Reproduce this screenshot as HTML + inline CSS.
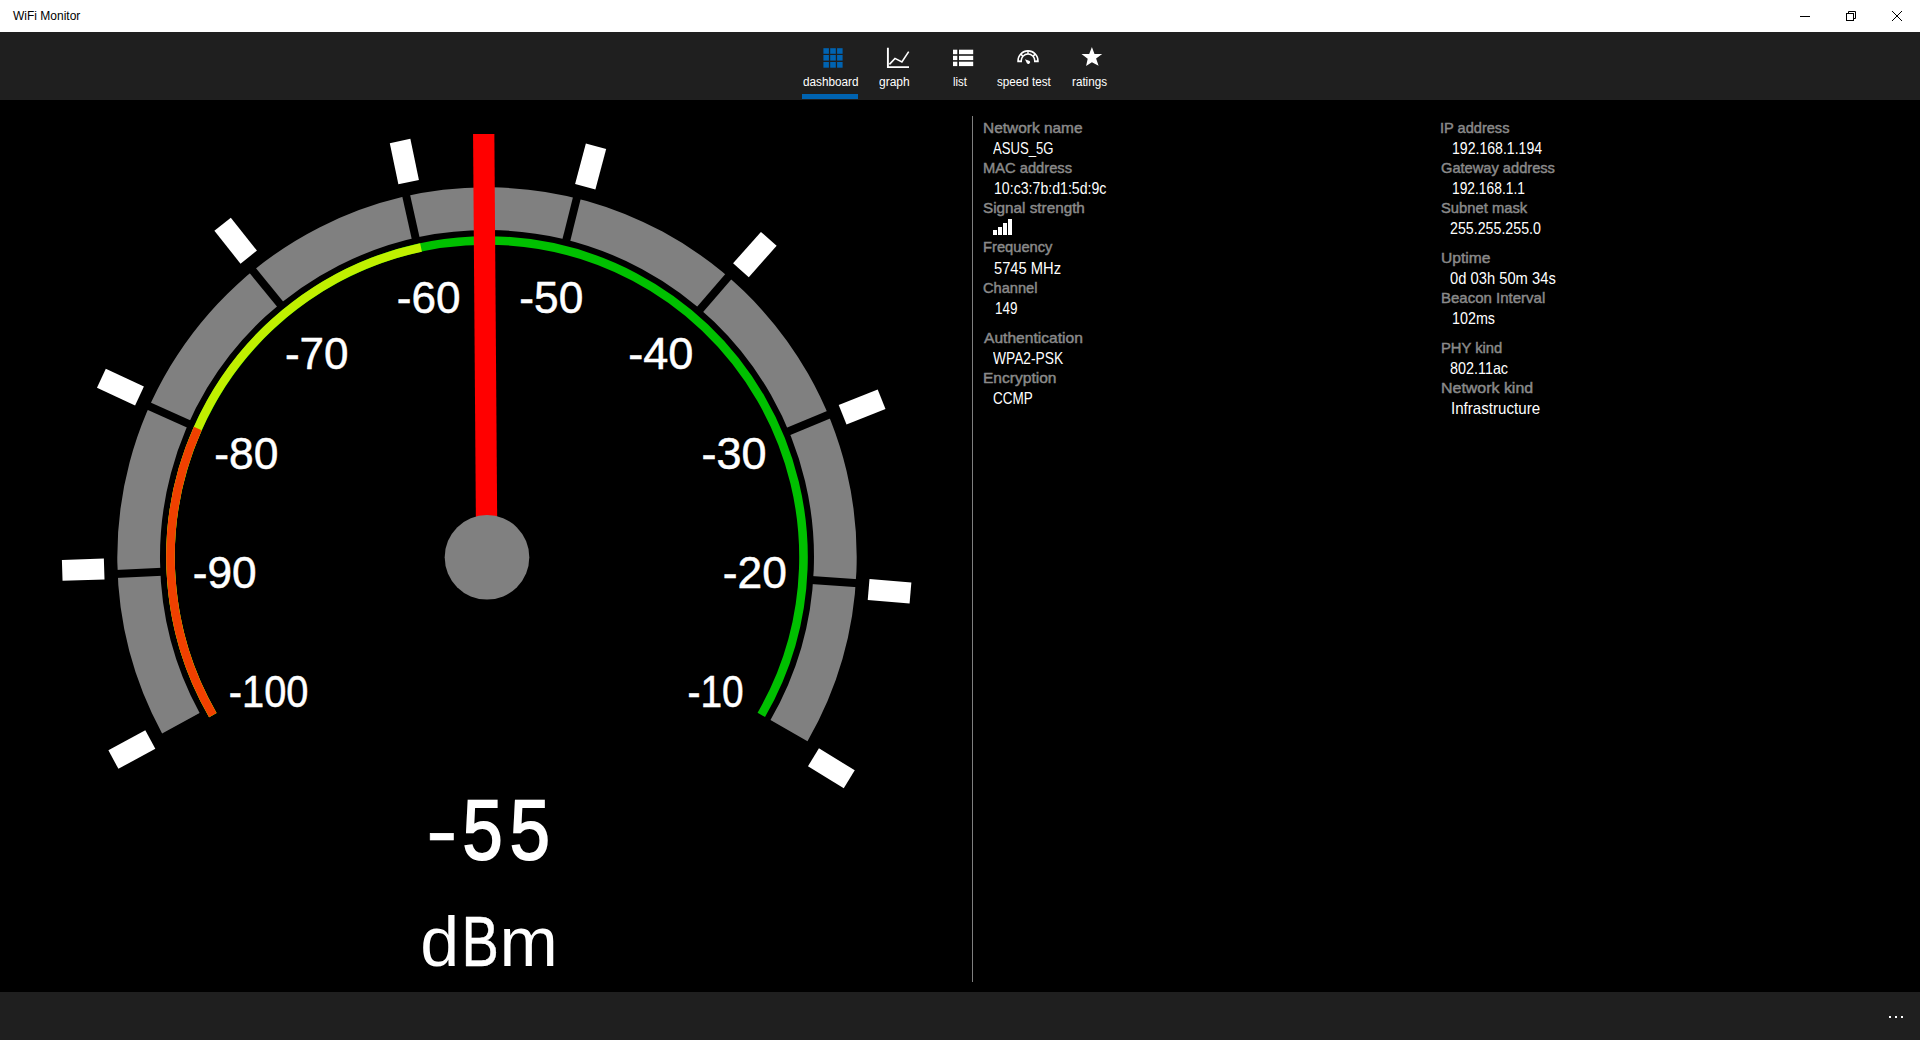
<!DOCTYPE html>
<html><head><meta charset="utf-8"><title>WiFi Monitor</title>
<style>
html,body{margin:0;padding:0;width:1920px;height:1040px;overflow:hidden;background:#000;font-family:"Liberation Sans",sans-serif;}
.abs{position:absolute;}
#title{left:0;top:0;width:1920px;height:32px;background:#fff;}
.ttl{font-size:12px;color:#000;line-height:14px;white-space:nowrap;transform-origin:0 0;}
#nav{left:0;top:32px;width:1920px;height:68px;background:#1f1f1f;}
#bottom{left:0;top:992px;width:1920px;height:48px;background:#1f1f1f;}
.navl{font-size:12px;color:#fff;line-height:14px;white-space:nowrap;transform-origin:0 0;}
#vline{left:972px;top:116px;width:1px;height:866px;background:#7f7f7f;}
.k{font-size:15px;color:#8a8a8a;-webkit-text-stroke:0.45px #8a8a8a;white-space:nowrap;line-height:20px;transform-origin:0 0;}
.v{font-size:15.5px;color:#fff;white-space:nowrap;line-height:20px;transform-origin:0 0;}
svg.gauge{position:absolute;left:0;top:0;}
.lbl{font-family:"Liberation Sans",sans-serif;font-size:44px;fill:#fff;stroke:#fff;stroke-width:0.5px;text-anchor:middle;}
#big{left:287px;top:786px;width:400px;text-align:center;font-size:88px;font-weight:bold;color:#fff;line-height:88px;}
#unit{left:287px;top:902px;width:400px;text-align:center;font-size:70px;color:#fff;line-height:80px;}
</style></head><body>
<div id="title" class="abs">
<svg class="abs" style="left:0;top:0" width="1920" height="32">
<rect x="1800" y="16" width="10" height="1" fill="#000"/>
<rect x="1846.5" y="13.5" width="7" height="7" fill="none" stroke="#000" stroke-width="1"/>
<path d="M1848.5 13.5V11.5H1855.5V18.5H1853.5" fill="none" stroke="#000" stroke-width="1"/>
<path d="M1892 11L1902 21M1902 11L1892 21" stroke="#000" stroke-width="1"/>
</svg>
</div>
<div id="nav" class="abs">
<svg class="abs" style="left:0;top:0" width="1920" height="68">
<g fill="#0063B1">
<rect x="823.4" y="16.2" width="5.5" height="5.6"/><rect x="830.2" y="16.2" width="5.6" height="5.6"/><rect x="837.1" y="16.2" width="5.5" height="5.6"/>
<rect x="823.4" y="23" width="5.5" height="5.6"/><rect x="830.2" y="23" width="5.6" height="5.6"/><rect x="837.1" y="23" width="5.5" height="5.6"/>
<rect x="823.4" y="30" width="5.5" height="5.7"/><rect x="830.2" y="30" width="5.6" height="5.7"/><rect x="837.1" y="30" width="5.5" height="5.7"/>
</g>
<rect x="802" y="62" width="56" height="5" fill="#0063B1"/>
<path d="M887.9 15.8V35.1H909" fill="none" stroke="#fff" stroke-width="1.9"/>
<path d="M889.4 32.4L895 26.4L901.9 29.9L908.7 19.6" fill="none" stroke="#fff" stroke-width="1.6"/>
<g fill="#fff">
<rect x="953" y="17.7" width="4.3" height="4.5"/><rect x="959" y="17.7" width="14.2" height="4.5"/>
<rect x="953" y="23.8" width="4.3" height="4.3"/><rect x="959" y="23.8" width="14.2" height="4.3"/>
<rect x="953" y="29.7" width="4.3" height="4.4"/><rect x="959" y="29.7" width="14.2" height="4.4"/>
</g>
<path d="M1017.25 30.25V28.75A10.75 10.75 0 0 1 1038.75 28.75V30.25H1034V28.75A6 6 0 0 0 1022 28.75V30.25Z" fill="#fff"/>
<g fill="none" stroke="#1f1f1f" stroke-width="1.6">
<path d="M1019.7 28.4A8.3 8.3 0 0 1 1021.3 23.8"/><path d="M1022.5 22.6A8.3 8.3 0 0 1 1027.3 20.5"/><path d="M1028.7 20.5A8.3 8.3 0 0 1 1033.5 22.6"/><path d="M1034.7 23.8A8.3 8.3 0 0 1 1036.3 28.4"/>
</g>
<path d="M1025 27.2L1029.7 28.9A1.8 1.8 0 0 1 1026.9 31.2Z" fill="#fff"/>
<path d="M1091.9 15L1094.5 21.9H1102.2L1096.1 26.6L1098.6 33.8L1091.9 30.3L1086.1 34L1087.7 26.8L1081.5 22.1H1089.2Z" fill="#fff"/>
</svg>
</div>
<div id="bottom" class="abs">
<svg class="abs" style="left:0;top:0" width="1920" height="48">
<rect x="1889" y="24" width="2" height="2" fill="#fff"/><rect x="1895" y="24" width="2" height="2" fill="#fff"/><rect x="1901" y="24" width="2" height="2" fill="#fff"/>
</svg>
</div>
<div id="vline" class="abs"></div>
<div class="k abs" style="left:983.40px;top:118.00px;transform:scaleX(1.0289)">Network name</div>
<div class="v abs" style="left:992.60px;top:138.00px;transform:scale(0.8451,1.05)">ASUS_5G</div>
<div class="k abs" style="left:983.40px;top:158.00px;transform:scaleX(0.9802)">MAC address</div>
<div class="v abs" style="left:993.80px;top:178.00px;transform:scale(0.9122,1.05)">10:c3:7b:d1:5d:9c</div>
<div class="k abs" style="left:983.40px;top:198.00px;transform:scaleX(1.0180)">Signal strength</div>
<svg class="abs" style="left:993px;top:217px" width="24" height="20"><g fill="#fff"><rect x="0" y="13" width="4" height="5"/><rect x="5" y="10" width="4" height="8"/><rect x="10" y="6" width="4" height="12"/><rect x="15" y="2" width="4" height="16"/></g></svg>
<div class="k abs" style="left:983.40px;top:237.00px;transform:scaleX(0.9803)">Frequency</div>
<div class="v abs" style="left:993.80px;top:258.00px;transform:scale(0.9494,1.05)">5745 MHz</div>
<div class="k abs" style="left:983.40px;top:278.00px;transform:scaleX(0.9750)">Channel</div>
<div class="v abs" style="left:994.60px;top:298.00px;transform:scale(0.8694,1.05)">149</div>
<div class="k abs" style="left:984.44px;top:328.00px;transform:scaleX(1.0396)">Authentication</div>
<div class="v abs" style="left:992.60px;top:348.00px;transform:scale(0.8886,1.05)">WPA2-PSK</div>
<div class="k abs" style="left:983.40px;top:368.00px;transform:scaleX(1.0367)">Encryption</div>
<div class="v abs" style="left:992.60px;top:388.00px;transform:scale(0.8712,1.05)">CCMP</div>
<div class="k abs" style="left:1440.02px;top:118.00px;transform:scaleX(0.9719)">IP address</div>
<div class="v abs" style="left:1451.60px;top:138.00px;transform:scale(0.9091,1.05)">192.168.1.194</div>
<div class="k abs" style="left:1441.00px;top:158.00px;transform:scaleX(0.9761)">Gateway address</div>
<div class="v abs" style="left:1451.60px;top:178.00px;transform:scale(0.8902,1.05)">192.168.1.1</div>
<div class="k abs" style="left:1441.00px;top:198.00px;transform:scaleX(0.9842)">Subnet mask</div>
<div class="v abs" style="left:1450.40px;top:218.00px;transform:scale(0.9172,1.05)">255.255.255.0</div>
<div class="k abs" style="left:1441.00px;top:248.00px;transform:scaleX(1.0417)">Uptime</div>
<div class="v abs" style="left:1450.40px;top:268.00px;transform:scale(0.9514,1.05)">0d 03h 50m 34s</div>
<div class="k abs" style="left:1441.00px;top:288.00px;transform:scaleX(1.0000)">Beacon Interval</div>
<div class="v abs" style="left:1451.60px;top:308.00px;transform:scale(0.9234,1.05)">102ms</div>
<div class="k abs" style="left:1441.00px;top:338.00px;transform:scaleX(0.9839)">PHY kind</div>
<div class="v abs" style="left:1450.40px;top:358.00px;transform:scale(0.9270,1.05)">802.11ac</div>
<div class="k abs" style="left:1441.00px;top:378.00px;transform:scaleX(1.0628)">Network kind</div>
<div class="v abs" style="left:1450.62px;top:398.00px;transform:scale(0.9756,1.05)">Infrastructure</div>
<div class="navl abs" style="left:803.10px;top:75.00px;transform:scaleX(0.9787)">dashboard</div>
<div class="navl abs" style="left:879.40px;top:75.00px;transform:scaleX(1.0003)">graph</div>
<div class="navl abs" style="left:952.81px;top:75.00px;transform:scaleX(0.9474)">list</div>
<div class="navl abs" style="left:997.40px;top:75.00px;transform:scaleX(0.9714)">speed test</div>
<div class="navl abs" style="left:1071.80px;top:75.00px;transform:scaleX(0.9724)">ratings</div>
<div class="ttl abs" style="left:13.00px;top:9.00px">WiFi Monitor</div>
<svg class="gauge" width="1920" height="1040" viewBox="0 0 1920 1040">
<path d="M180.86 723.22A348.35 348.35 0 1 1 788.98 730.65" fill="none" stroke="#808080" stroke-width="42.7"/>
<rect x="483.00" y="185.00" width="8" height="47" fill="#000" transform="rotate(-119.280 487.0 557.0)"/>
<rect x="483.00" y="185.00" width="8" height="47" fill="#000" transform="rotate(-92.613 487.0 557.0)"/>
<rect x="483.00" y="185.00" width="8" height="47" fill="#000" transform="rotate(-65.947 487.0 557.0)"/>
<rect x="483.00" y="185.00" width="8" height="47" fill="#000" transform="rotate(-39.280 487.0 557.0)"/>
<rect x="483.00" y="185.00" width="8" height="47" fill="#000" transform="rotate(-12.613 487.0 557.0)"/>
<rect x="483.00" y="185.00" width="8" height="47" fill="#000" transform="rotate(14.053 487.0 557.0)"/>
<rect x="483.00" y="185.00" width="8" height="47" fill="#000" transform="rotate(40.720 487.0 557.0)"/>
<rect x="483.00" y="185.00" width="8" height="47" fill="#000" transform="rotate(67.387 487.0 557.0)"/>
<rect x="483.00" y="185.00" width="8" height="47" fill="#000" transform="rotate(94.053 487.0 557.0)"/>
<rect x="483.00" y="185.00" width="8" height="47" fill="#000" transform="rotate(120.720 487.0 557.0)"/>
<rect x="476.50" y="132.00" width="21" height="42" fill="#fff" transform="rotate(-118.470 487.0 557.0)"/>
<rect x="476.50" y="132.00" width="21" height="42" fill="#fff" transform="rotate(-91.803 487.0 557.0)"/>
<rect x="476.50" y="132.00" width="21" height="42" fill="#fff" transform="rotate(-65.137 487.0 557.0)"/>
<rect x="476.50" y="132.00" width="21" height="42" fill="#fff" transform="rotate(-38.470 487.0 557.0)"/>
<rect x="476.50" y="132.00" width="21" height="42" fill="#fff" transform="rotate(-11.803 487.0 557.0)"/>
<rect x="476.50" y="132.00" width="21" height="42" fill="#fff" transform="rotate(14.863 487.0 557.0)"/>
<rect x="476.50" y="132.00" width="21" height="42" fill="#fff" transform="rotate(41.530 487.0 557.0)"/>
<rect x="476.50" y="132.00" width="21" height="42" fill="#fff" transform="rotate(68.197 487.0 557.0)"/>
<rect x="476.50" y="132.00" width="21" height="42" fill="#fff" transform="rotate(94.863 487.0 557.0)"/>
<rect x="476.50" y="132.00" width="21" height="42" fill="#fff" transform="rotate(121.530 487.0 557.0)"/>
<path d="M212.82 715.11A316.5 316.5 0 1 1 761.29 714.92" fill="none" stroke="#00C000" stroke-width="8.6"/>
<path d="M212.82 715.11A316.5 316.5 0 0 1 421.03 247.45" fill="none" stroke="#C0F000" stroke-width="8.6"/>
<path d="M212.82 715.11A316.5 316.5 0 0 1 197.75 428.52" fill="none" stroke="#F04000" stroke-width="8.6"/>
<rect x="476.15" y="134" width="21.3" height="423" fill="#f00" transform="rotate(-0.42 486.8 557.0)"/>
<circle cx="487" cy="557.3" r="42.3" fill="#808080"/>
<text transform="translate(268.60 707.25) scale(0.9049 1)" x="0" y="0" class="lbl">-100</text>
<text transform="translate(224.75 587.50) scale(1.0052 1)" x="0" y="0" class="lbl">-90</text>
<text transform="translate(246.35 469.25) scale(1.0084 1)" x="0" y="0" class="lbl">-80</text>
<text transform="translate(316.70 368.65) scale(1.0000 1)" x="0" y="0" class="lbl">-70</text>
<text transform="translate(428.65 313.20) scale(1.0017 1)" x="0" y="0" class="lbl">-60</text>
<text transform="translate(551.30 313.20) scale(1.0067 1)" x="0" y="0" class="lbl">-50</text>
<text transform="translate(660.75 368.65) scale(1.0251 1)" x="0" y="0" class="lbl">-40</text>
<text transform="translate(734.10 469.25) scale(1.0235 1)" x="0" y="0" class="lbl">-30</text>
<text transform="translate(754.75 587.50) scale(1.0084 1)" x="0" y="0" class="lbl">-20</text>
<text transform="translate(715.60 707.25) scale(0.8836 1)" x="0" y="0" class="lbl">-10</text>
</svg>
<svg class="abs" style="left:0;top:0" width="1920" height="1040"><g fill="#fff" stroke="#fff" font-family="Liberation Sans" font-size="86">
<text transform="translate(430.4 858.8) scale(1.1 1)" x="-4" y="0" stroke-width="0.6">-</text>
<text transform="translate(465 859.2) scale(0.84 0.98)" x="-3" y="0" stroke-width="2">5</text>
<text transform="translate(512.3 859.2) scale(0.84 0.98)" x="-3" y="0" stroke-width="2">5</text>
</g>
<g fill="#fff" font-family="Liberation Sans" font-size="70">
<text x="420.2" y="965.5">d</text>
<text transform="translate(466.2 965.5) scale(0.8 1)" x="-6" y="0" stroke="#fff" stroke-width="0.5">B</text>
<text x="499.5" y="965.5">m</text>
</g></svg>
</body></html>
